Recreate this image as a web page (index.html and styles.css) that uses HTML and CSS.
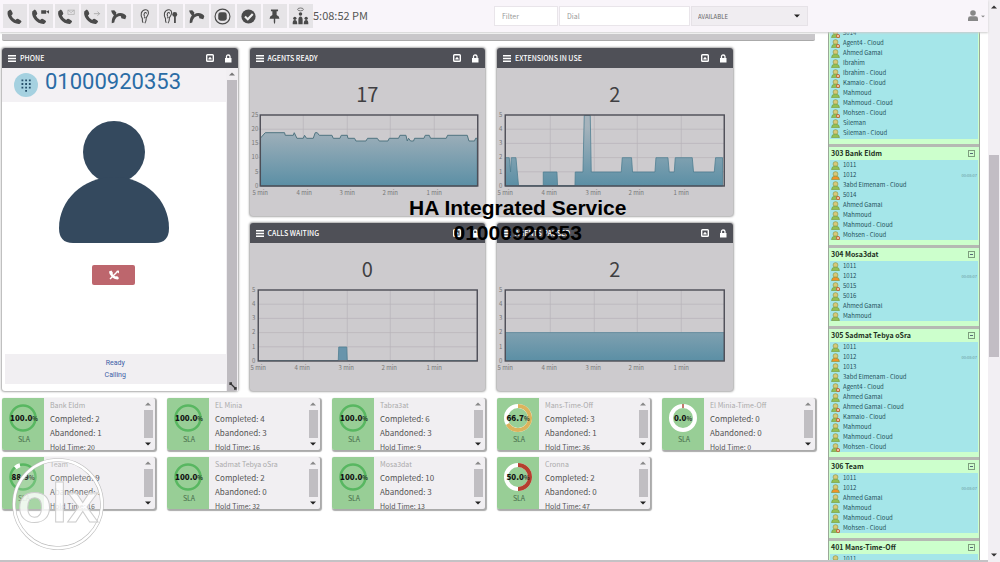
FILE: index.html
```html
<!DOCTYPE html>
<html lang="en">
<head>
<meta charset="utf-8">
<title>Call Center Dashboard</title>
<link rel="stylesheet" href="styles.css">
</head>
<body>
<svg class="defs" width="0" height="0" aria-hidden="true">
  <defs>
    <linearGradient id="area" gradientUnits="userSpaceOnUse" x1="0" y1="14" x2="0" y2="74">
      <stop offset="0" stop-color="#a6b3bc"/><stop offset="1" stop-color="#5b8fa5"/>
    </linearGradient>
    <symbol id="handset" viewBox="0 0 24 24"><path d="M2.500 4.500 6 2Q8 2.500 9.500 7.500 9.500 9.500 7.500 10.500 9 14.500 13.500 17 15.500 14.500 17.500 15.500 22 18 22 19.500L19 22.500Q11 23 5.500 16 1 10 2.500 4.500Z"/></symbol>
    <symbol id="hangup" viewBox="0 0 24 24"><path d="M1.500 3.500 6 3 9 6.500 8.500 9Q14 5.500 20 8.500 23 10.500 23 12L21.500 16 16 14.500 15.500 11.500Q12 10.500 9 13.500 6.500 16.500 6 20.500L2.500 21.500Q2 14.500 5.500 10.500 2.500 8 1.500 3.500Z"/></symbol>
    <symbol id="ear" viewBox="0 0 24 24"><path d="M10 21Q8.500 18 9 15 6.500 11 7.500 7 9.500 2 14 2.500 18 3 17.500 8 16.500 11 14.500 13.500 14.500 19 12.500 21.500M12 12Q10.500 9 12 7 14 5.500 15 8M11.500 14.500 13 12.500" fill="none" stroke="currentColor" stroke-width="1.500"/></symbol>
    <symbol id="menu" viewBox="0 0 8 7"><path d="M0 0h8v1.500H0zM0 2.700h8v1.500H0zM0 5.400h8v1.500H0z"/></symbol>
    <symbol id="collapse" viewBox="0 0 8 8"><rect x=".7" y=".7" width="6.600" height="6.600" rx=".8" fill="none" stroke="currentColor" stroke-width="1.400"/><path d="M2.300 4.800 4 2.800 5.700 4.800V5.500H2.300Z"/></symbol>
    <symbol id="lock" viewBox="0 0 8 9"><path d="M1 4h6.500v4.500H1z"/><path d="M2.500 4V2.500Q2.500 1 4.200 1T6 2.500V4" fill="none" stroke="currentColor" stroke-width="1.300"/></symbol>
    <symbol id="up" viewBox="0 0 6 4"><path d="M0 3.500 3 .5 6 3.500Z"/></symbol>
    <symbol id="down" viewBox="0 0 6 4"><path d="M0 .5 3 3.500 6 .5Z"/></symbol>
    <symbol id="person" viewBox="0 0 10 10"><circle cx="5" cy="3.400" r="2.700" fill="#d8c878" stroke="#8c9440" stroke-width=".7"/><path d="M.6 9.600Q.6 5.600 5 5.600T9.400 9.600Z" fill="currentColor" stroke="#6f9440" stroke-width=".6"/></symbol>
    <symbol id="person-off" viewBox="0 0 10 10"><use href="#person"/><circle cx="7.800" cy="7.800" r="1.800" fill="#f0c8a8" stroke="#c2552e" stroke-width=".9"/></symbol>
    <symbol id="grid" viewBox="0 0 235 90"><path d="M8 17.200H227M8 31.400H227M8 45.600H227M8 59.800H227M53 3V74M97 3V74M140 3V74M184 3V74" fill="none" stroke="#b7b3b9" stroke-width=".7"/></symbol>
  </defs>
</svg>

<div class="shell">
  <div class="app">
    <header class="topbar">
      <div class="tools">
        <button class="tool" aria-label="Call"><svg viewBox="0 0 24 24"><use href="#handset"/></svg></button>
        <button class="tool" aria-label="Call camera"><svg viewBox="0 0 24 24"><use href="#handset" x="-2"/><path d="M13 3h7v5h-7zM20 5l4-2v5z"/></svg></button>
        <button class="tool" aria-label="Call message"><svg viewBox="0 0 24 24"><use href="#handset" x="-2"/><path d="M14 3h9v6h-9zM14 3l4.500 3.500L23 3" fill="none" stroke="#aaa"/></svg></button>
        <button class="tool" aria-label="Transfer"><svg viewBox="0 0 24 24"><use href="#handset" x="-2"/><path d="M14 8h8M19 5l3 3-3 3" fill="none" stroke="#999"/></svg></button>
        <button class="tool" aria-label="Hang up"><svg viewBox="0 0 24 24"><use href="#hangup"/></svg></button>
        <button class="tool" aria-label="Listen"><svg viewBox="0 0 24 24"><use href="#ear"/></svg></button>
        <button class="tool" aria-label="Whisper"><svg viewBox="0 0 24 24"><use href="#ear" x="-4"/><circle cx="18" cy="9" r="3.500"/><path d="M17 11h2.500v10H17z"/></svg></button>
        <button class="tool" aria-label="Barge"><svg viewBox="0 0 24 24"><use href="#hangup"/></svg></button>
        <button class="tool" aria-label="Record"><svg viewBox="0 0 24 24"><circle cx="12" cy="12" r="10.500" fill="none" stroke="currentColor" stroke-width="1.600"/><rect x="6" y="6" width="12" height="12" rx="3.500"/></svg></button>
        <button class="tool" aria-label="Confirm"><svg viewBox="0 0 24 24"><circle cx="12" cy="12" r="10"/><path d="m7 12 4 4 7-7.500" fill="none" stroke="#eee" stroke-width="3"/></svg></button>
        <button class="tool" aria-label="Pin"><svg viewBox="0 0 24 24"><path d="M7 2h10v2.500h-2V10q4 1.500 4 5H13v5l-1 3-1-3v-5H5q0-3.500 4-5V4.500H7z"/></svg></button>
        <button class="tool" aria-label="Conference"><svg viewBox="0 0 24 24"><ellipse cx="12" cy="2" rx="4" ry="2" fill="none" stroke="currentColor"/><circle cx="12" cy="8.500" r="2.500"/><path d="M9 17q0-5 3-5t3 5v6H9zM1 23q-.5-6 3-6t3.500 6zM16.500 23q0-6 3.500-6t3 6z"/><circle cx="4" cy="14.500" r="2.300"/><circle cx="20" cy="14.500" r="2.300"/></svg></button>
      </div>
      <time class="clock">5:08:52 PM</time>
      <form class="dialer">
        <input class="field filter" type="text" placeholder="Filter" aria-label="Filter">
        <input class="field dial" type="text" placeholder="Dial" aria-label="Dial">
        <div class="status"><select aria-label="Agent status"><option>AVAILABLE</option></select><svg class="caret" viewBox="0 0 6 4"><use href="#down"/></svg></div>
      </form>
      <button class="account" aria-label="Account"><svg class="account-icon" viewBox="0 0 12 12"><circle cx="6" cy="3" r="2.800"/><path d="M1 11V8.500Q1 6.300 3.500 6.300H8.500Q11 6.300 11 8.500V11Z"/></svg><svg class="caret-small" viewBox="0 0 6 4"><use href="#down"/></svg></button>
    </header>

    <div class="content">
      <main class="board">
        <div class="strip"></div>

        <section class="panel phone">
          <h2 class="bar"><svg class="i-menu"><use href="#menu"/></svg><span>PHONE</span><svg class="i-box"><use href="#collapse"/></svg><svg class="i-lock"><use href="#lock"/></svg></h2>
          <div class="phone-body">
            <div class="phone-main">
              <div class="caller">
                <button class="keypad" aria-label="Keypad"><svg viewBox="0 0 24 24"><g fill="none" stroke="#26506b" stroke-width="1.800" stroke-dasharray="1.800 1.900"><path d="M7.500 7.400h9.200M7.500 11h9.200M7.500 14.600h9.200"/></g><path d="M11.200 17h1.800v1.800h-1.800z" fill="#26506b"/></svg></button>
                <span class="number">01000920353</span>
              </div>
              <svg class="avatar" viewBox="0 0 110 123"><g fill="#34495e"><circle cx="55" cy="31" r="31"/><path d="M0 107C0 79 24 56 55 56S110 79 110 107Q110 122 96 122H14Q0 122 0 107Z"/></g></svg>
              <button class="reject" aria-label="Reject call"><svg viewBox="0 0 12 10"><path d="M1 1.500 3.500.5 5 3 4.500 4Q6 6 8 6.500L9 6 11 8 10 9.500Q6 9.500 3.500 6.500Q1 4 1 1.500Z"/><path d="M2 9 10 1" fill="none" stroke="#fff" stroke-width="1.500"/><path d="M8 1l3-.5v3z"/></svg></button>
              <div class="call-state"><div>Ready</div><div>Calling</div></div>
            </div>
            <div class="rail"><svg class="arrow"><use href="#up"/></svg><div class="thumb"></div><svg class="grip" viewBox="0 0 8 8"><path d="M1 1 7 7M1 3V1H3M5 7H7V5" fill="none" stroke="#333" stroke-width="1.300"/></svg></div>
          </div>
        </section>

        <section class="panel">
          <h2 class="bar"><svg class="i-menu"><use href="#menu"/></svg><span>AGENTS READY</span><svg class="i-box"><use href="#collapse"/></svg><svg class="i-lock"><use href="#lock"/></svg></h2>
          <div class="value">17</div>
          <svg class="chart" viewBox="0 0 235 90">
            <use href="#grid"/>
            <path fill="url(#area)" stroke="#4f7480" d="M10.300 26 15 20.700H34.300L35 23.300H43L44 20.700 46.700 26.300H53L54.300 23.300 56.300 26.300H63L65 20.700H67L69 23.300H81.700L83 26.300H89.700L91 23.300H97L97.700 26.300H104.300L105.700 29H115.700L117.300 26.300H127L129 29H137.700L139 26.300H148.300L149.700 23.300H155.700L157 29 158.300 26.300 160.300 29H163.300L164.300 26.300H173.700L175 23.300H179L180.300 26.300H196L197.300 23.300H217L218.700 29H224.300L225.300 26.300H227V74H10.300Z"/>
            <rect class="frame" x="10" y="3" width="217.500" height="71"/>
            <g class="ticks-y"><text x="8" y="5">25</text><text x="8" y="19">20</text><text x="8" y="33">15</text><text x="8" y="47">10</text><text x="8" y="62">5</text><text x="8" y="76">0</text></g>
            <g class="ticks-x"><text x="10" y="83">5 min</text><text x="54" y="83">4 min</text><text x="97" y="83">3 min</text><text x="140" y="83">2 min</text><text x="184" y="83">1 min</text></g>
          </svg>
        </section>

        <section class="panel">
          <h2 class="bar"><svg class="i-menu"><use href="#menu"/></svg><span>EXTENSIONS IN USE</span><svg class="i-box"><use href="#collapse"/></svg><svg class="i-lock"><use href="#lock"/></svg></h2>
          <div class="value">2</div>
          <svg class="chart" viewBox="0 0 235 90">
            <use href="#grid"/>
            <path fill="url(#area)" stroke="#4f7f92" stroke-width=".8" d="M8 74V45.700H12L13.300 60 14 45.700H18.700L20 60 21.300 73.700H46V60H59.700L60.300 73.700H77.700L78 60H85.700L87 3.500H93L94 60H124L125 45.700H134.300L135.300 60H157.700L158.700 45.700H170.700L172 60H177L178 45.700H195L196.300 60H217L218.300 45.700H225.300V74Z"/>
            <rect class="frame" x="8" y="3" width="219" height="71"/>
            <g class="ticks-y"><text x="5" y="5">5</text><text x="5" y="19">4</text><text x="5" y="33">3</text><text x="5" y="47">2</text><text x="5" y="62">1</text><text x="5" y="76">0</text></g>
            <g class="ticks-x"><text x="8" y="83">5 min</text><text x="52" y="83">4 min</text><text x="96" y="83">3 min</text><text x="139" y="83">2 min</text><text x="184" y="83">1 min</text></g>
          </svg>
        </section>

        <section class="panel second">
          <h2 class="bar"><svg class="i-menu"><use href="#menu"/></svg><span>CALLS WAITING</span><svg class="i-box"><use href="#collapse"/></svg><svg class="i-lock"><use href="#lock"/></svg></h2>
          <div class="value">0</div>
          <svg class="chart" viewBox="0 0 235 90">
            <use href="#grid"/>
            <path fill="#6894ab" stroke="#4f7f92" stroke-width=".8" d="M8 73.500H88L88.500 60H96.500L97 73.500H227"/>
            <rect class="frame" x="8" y="3" width="219" height="71"/>
            <g class="ticks-y"><text x="5" y="5">5</text><text x="5" y="19">4</text><text x="5" y="33">3</text><text x="5" y="47">2</text><text x="5" y="62">1</text><text x="5" y="76">0</text></g>
            <g class="ticks-x"><text x="8" y="83">5 min</text><text x="52" y="83">4 min</text><text x="96" y="83">3 min</text><text x="139" y="83">2 min</text><text x="184" y="83">1 min</text></g>
          </svg>
        </section>

        <section class="panel">
          <h2 class="bar"><svg class="i-menu"><use href="#menu"/></svg><span>AGENTS PAUSED</span><svg class="i-box"><use href="#collapse"/></svg><svg class="i-lock"><use href="#lock"/></svg></h2>
          <div class="value">2</div>
          <svg class="chart" viewBox="0 0 235 90">
            <use href="#grid"/>
            <path fill="url(#area)" d="M8 45.600H227V74H8Z"/><path d="M8 45.600H227" stroke="#5b8799" stroke-width=".8"/>
            <rect class="frame" x="8" y="3" width="219" height="71"/>
            <g class="ticks-y"><text x="5" y="5">5</text><text x="5" y="19">4</text><text x="5" y="33">3</text><text x="5" y="47">2</text><text x="5" y="62">1</text><text x="5" y="76">0</text></g>
            <g class="ticks-x"><text x="8" y="83">5 min</text><text x="52" y="83">4 min</text><text x="96" y="83">3 min</text><text x="139" y="83">2 min</text><text x="184" y="83">1 min</text></g>
          </svg>
        </section>

        <article class="card first">
          <div class="sla"><svg class="ring" viewBox="0 0 30 28"><circle class="full" cx="14" cy="14" r="12.500"/><text x="15" y="17">100.0<tspan>%</tspan></text></svg><span>SLA</span></div>
          <div class="stats"><h3>Bank Eldm</h3><p>Completed: 2</p><p>Abandoned: 1</p><p class="hold">Hold Time: 20</p></div>
          <div class="mini-rail"><svg><use href="#up"/></svg><i></i><svg class="dark"><use href="#down"/></svg></div>
        </article>
        <article class="card">
          <div class="sla"><svg class="ring" viewBox="0 0 30 28"><circle class="full" cx="14" cy="14" r="12.500"/><text x="15" y="17">100.0<tspan>%</tspan></text></svg><span>SLA</span></div>
          <div class="stats"><h3>EL Minia</h3><p>Completed: 4</p><p>Abandoned: 3</p><p class="hold">Hold Time: 16</p></div>
          <div class="mini-rail"><svg><use href="#up"/></svg><i></i><svg class="dark"><use href="#down"/></svg></div>
        </article>
        <article class="card">
          <div class="sla"><svg class="ring" viewBox="0 0 30 28"><circle class="full" cx="14" cy="14" r="12.500"/><text x="15" y="17">100.0<tspan>%</tspan></text></svg><span>SLA</span></div>
          <div class="stats"><h3>Tabra3at</h3><p>Completed: 6</p><p>Abandoned: 3</p><p class="hold">Hold Time: 9</p></div>
          <div class="mini-rail"><svg><use href="#up"/></svg><i></i><svg class="dark"><use href="#down"/></svg></div>
        </article>
        <article class="card">
          <div class="sla"><svg class="ring" viewBox="0 0 30 28"><circle class="track" cx="14" cy="14" r="12"/><path class="arc" stroke="#dcb35c" d="M14 2A12 12 0 1 1 3.600 20"/><text x="14" y="17">66.7<tspan>%</tspan></text></svg><span>SLA</span></div>
          <div class="stats"><h3>Mans-Time-Off</h3><p>Completed: 3</p><p>Abandoned: 1</p><p class="hold">Hold Time: 36</p></div>
          <div class="mini-rail"><svg><use href="#up"/></svg><i></i><svg class="dark"><use href="#down"/></svg></div>
        </article>
        <article class="card">
          <div class="sla"><svg class="ring" viewBox="0 0 30 28"><circle class="track" cx="14" cy="14" r="12"/><path class="arc" stroke="#a8402f" d="M13.300 2H14.700"/><text x="14" y="17">0.0<tspan>%</tspan></text></svg><span>SLA</span></div>
          <div class="stats"><h3>El Minia-Time-Off</h3><p>Completed: 0</p><p>Abandoned: 0</p><p class="hold">Hold Time: 0</p></div>
          <div class="mini-rail"><svg><use href="#up"/></svg><i></i><svg class="dark"><use href="#down"/></svg></div>
        </article>
        <article class="card first">
          <div class="sla"><svg class="ring" viewBox="0 0 30 28"><circle class="full" cx="14" cy="14" r="12.500"/><path class="arc" stroke="#fff" d="M6.300 4.800Q8.500 2.800 11 2.300"/><text x="14" y="17">88.9<tspan>%</tspan></text></svg><span>SLA</span></div>
          <div class="stats"><h3>Team</h3><p>Completed: 9</p><p>Abandoned: 1</p><p class="hold">Hold Time: 16</p></div>
          <div class="mini-rail"><svg><use href="#up"/></svg><i></i><svg class="dark"><use href="#down"/></svg></div>
        </article>
        <article class="card">
          <div class="sla"><svg class="ring" viewBox="0 0 30 28"><circle class="full" cx="14" cy="14" r="12.500"/><text x="15" y="17">100.0<tspan>%</tspan></text></svg><span>SLA</span></div>
          <div class="stats"><h3>Sadmat Tebya oSra</h3><p>Completed: 2</p><p>Abandoned: 0</p><p class="hold">Hold Time: 32</p></div>
          <div class="mini-rail"><svg><use href="#up"/></svg><i></i><svg class="dark"><use href="#down"/></svg></div>
        </article>
        <article class="card">
          <div class="sla"><svg class="ring" viewBox="0 0 30 28"><circle class="full" cx="14" cy="14" r="12.500"/><text x="15" y="17">100.0<tspan>%</tspan></text></svg><span>SLA</span></div>
          <div class="stats"><h3>Mosa3dat</h3><p>Completed: 10</p><p>Abandoned: 3</p><p class="hold">Hold Time: 13</p></div>
          <div class="mini-rail"><svg><use href="#up"/></svg><i></i><svg class="dark"><use href="#down"/></svg></div>
        </article>
        <article class="card">
          <div class="sla"><svg class="ring" viewBox="0 0 30 28"><circle class="track" cx="14" cy="14" r="12"/><path class="arc" stroke="#b5402f" d="M14 2A12 12 0 0 1 14 26"/><text x="14" y="17">50.0<tspan>%</tspan></text></svg><span>SLA</span></div>
          <div class="stats"><h3>Cronna</h3><p>Completed: 2</p><p>Abandoned: 0</p><p class="hold">Hold Time: 47</p></div>
          <div class="mini-rail"><svg><use href="#up"/></svg><i></i><svg class="dark"><use href="#down"/></svg></div>
        </article>
      </main>

      <aside class="queues">
        <section class="queue">
          <ul class="continued">
            <li><svg><use href="#person-off"/></svg>5014</li>
            <li><svg><use href="#person-off"/></svg>Agent4 - Cloud</li>
            <li><svg><use href="#person"/></svg>Ahmed Gamal</li>
            <li><svg><use href="#person"/></svg>Ibrahim</li>
            <li><svg><use href="#person-off"/></svg>Ibrahim - Cloud</li>
            <li><svg><use href="#person-off"/></svg>Kamalo - Cloud</li>
            <li><svg><use href="#person"/></svg>Mahmoud</li>
            <li><svg><use href="#person"/></svg>Mahmoud - Cloud</li>
            <li><svg><use href="#person-off"/></svg>Mohsen - Cloud</li>
            <li><svg><use href="#person"/></svg>Sileman</li>
            <li><svg><use href="#person"/></svg>Sileman - Cloud</li>
          </ul>
        </section>
        <section class="queue">
          <h3>303 Bank Eldm<button aria-label="Collapse 303"></button></h3>
          <ul>
            <li><svg><use href="#person"/></svg>1011</li>
            <li class="busy"><svg><use href="#person"/></svg>1012<time>00:08:07</time></li>
            <li><svg><use href="#person"/></svg>3abd Elmenam - Cloud</li>
            <li><svg><use href="#person-off"/></svg>5014</li>
            <li><svg><use href="#person"/></svg>Ahmed Gamal</li>
            <li><svg><use href="#person"/></svg>Mahmoud</li>
            <li><svg><use href="#person"/></svg>Mahmoud - Cloud</li>
            <li><svg><use href="#person-off"/></svg>Mohsen - Cloud</li>
          </ul>
        </section>
        <section class="queue">
          <h3>304 Mosa3dat<button aria-label="Collapse 304"></button></h3>
          <ul>
            <li><svg><use href="#person"/></svg>1011</li>
            <li class="busy"><svg><use href="#person"/></svg>1012<time>00:08:07</time></li>
            <li><svg><use href="#person-off"/></svg>5015</li>
            <li><svg><use href="#person"/></svg>5016</li>
            <li><svg><use href="#person"/></svg>Ahmed Gamal</li>
            <li><svg><use href="#person"/></svg>Mahmoud</li>
          </ul>
        </section>
        <section class="queue">
          <h3>305 Sadmat Tebya oSra<button aria-label="Collapse 305"></button></h3>
          <ul>
            <li><svg><use href="#person"/></svg>1011</li>
            <li class="busy"><svg><use href="#person"/></svg>1012<time>00:08:07</time></li>
            <li><svg><use href="#person"/></svg>1013</li>
            <li><svg><use href="#person"/></svg>3abd Elmenam - Cloud</li>
            <li><svg><use href="#person-off"/></svg>Agent4 - Cloud</li>
            <li><svg><use href="#person"/></svg>Ahmed Gamal</li>
            <li><svg><use href="#person-off"/></svg>Ahmed Gamal - Cloud</li>
            <li><svg><use href="#person-off"/></svg>Kamalo - Cloud</li>
            <li><svg><use href="#person"/></svg>Mahmoud</li>
            <li><svg><use href="#person"/></svg>Mahmoud - Cloud</li>
            <li><svg><use href="#person-off"/></svg>Mohsen - Cloud</li>
          </ul>
        </section>
        <section class="queue">
          <h3>306 Team<button aria-label="Collapse 306"></button></h3>
          <ul>
            <li><svg><use href="#person"/></svg>1011</li>
            <li class="busy"><svg><use href="#person"/></svg>1012<time>00:08:07</time></li>
            <li><svg><use href="#person"/></svg>Ahmed Gamal</li>
            <li><svg><use href="#person"/></svg>Mahmoud</li>
            <li><svg><use href="#person"/></svg>Mahmoud - Cloud</li>
            <li><svg><use href="#person-off"/></svg>Mohsen - Cloud</li>
          </ul>
        </section>
        <section class="queue">
          <h3>401 Mans-Time-Off<button aria-label="Collapse 401"></button></h3>
          <ul>
            <li><svg><use href="#person"/></svg>1011</li>
          </ul>
        </section>
      </aside>
    </div>
  </div>

  <div class="page-rail"><svg><use href="#up"/></svg><div class="track-area"><div class="page-thumb"></div></div><svg><use href="#down"/></svg></div>
</div>

<div class="banner">HA Integrated Service<br>01000920353</div>
<svg class="stamp" viewBox="0 0 92 92"><circle cx="46" cy="46" r="44" fill="#fff" fill-opacity=".15" stroke="#bbb" stroke-width="3.600"/><circle cx="46" cy="46" r="44" fill="none" stroke="#fff" stroke-width="2.400"/><text x="46" y="64" text-anchor="middle">olx</text></svg>
</body>
</html>
```
FILE: styles.css
```css
* { box-sizing: border-box; }

body {
  margin: 0;
  height: 100vh;
  overflow: hidden;
  position: relative;
  background: #fff;
  color: #333;
  font-family: "Noto Sans CJK SC", "Open Sans", sans-serif;
  font-size: 8px;
}

h2, h3, p, ul { margin: 0; padding: 0; }
ul { list-style: none; }
button, input, select { font: inherit; color: inherit; }
button { border: 0; padding: 0; background: none; }
svg { display: block; fill: currentColor; }
.defs { position: absolute; }

.shell { display: flex; height: 100vh; }
.app {
  flex: 1;
  min-width: 0;
  display: flex;
  flex-direction: column;
  border-bottom: 2px solid #c4c2c5;
}

/* top bar */
.topbar {
  display: flex;
  align-items: center;
  height: 32px;
  flex: none;
  padding-left: 3px;
  background: #f9f5fa;
  box-shadow: 0 1px 2px #ccc;
  z-index: 1;
}
.tools { display: flex; gap: 2px; }
.tool {
  width: 24px;
  height: 24px;
  padding: 3px;
  background: #e6e4e7;
  color: #4a4a4a;
}
.tool svg { width: 17px; height: 17px; overflow: visible; }
.clock { font-size: 11px; line-height: 16px; color: #555; padding-bottom: 3px; }
.dialer { display: flex; margin-left: auto; gap: 1px; }
.field {
  height: 20px;
  border: 1px solid #e9e5ea;
  background: #fff;
  padding: 0 7px;
  font-size: 7px;
}
.field::placeholder { color: #999; }
.filter { width: 64px; }
.dial { width: 131px; }
.status { position: relative; width: 117px; }
.status select {
  appearance: none;
  width: 100%;
  height: 20px;
  border: 1px solid #e6e2e7;
  background: #f0edf1;
  padding: 0 6px;
  font-size: 6px;
  color: #666;
}
.caret { position: absolute; right: 8px; top: 8px; width: 6px; height: 4px; color: #222; }
.account {
  display: flex;
  align-items: center;
  gap: 2px;
  margin: 0 3px 0 159px;
  color: #888;
}
.account-icon { width: 12px; height: 12px; }
.caret-small { width: 4px; height: 3px; }

/* dashboard */
.content { display: flex; flex: 1; min-height: 0; overflow: hidden; }
.board {
  flex: 1;
  min-width: 0;
  display: grid;
  grid-template-columns: repeat(10, 1fr);
  gap: 7px 12px;
  align-content: start;
  padding: 2px 13px 0 2px;
}
.strip {
  grid-column: 1 / -1;
  height: 7px;
  background: #c9c7ca;
  border-bottom: 1px solid #aaa;
  border-radius: 0 0 2px 2px;
}
.panel {
  grid-column: span 3;
  background: #cdcbce;
  border-radius: 3px;
  box-shadow: 0 0 2px 1px #aaa;
  padding-bottom: 14px;
}
.second { grid-column: 4 / span 3; }
.bar {
  display: flex;
  align-items: center;
  height: 20px;
  padding: 0 6px;
  background: #4f5057;
  color: #fff;
  border-radius: 3px 3px 0 0;
  font-size: 7px;
  line-height: 20px;
  font-weight: 500;
}
.bar span { flex: 1; padding-left: 4px; }
.i-menu { width: 8px; height: 7px; }
.i-box { width: 8px; height: 8px; margin-right: 10px; }
.i-lock { width: 8px; height: 9px; }
.value {
  padding-top: 8px;
  font-size: 20px;
  line-height: 36px;
  text-align: center;
  color: #3f3f42;
}
.chart { width: 100%; height: 90px; overflow: visible; }
.frame { fill: none; stroke: #4c4c55; stroke-width: 1.4; }
.ticks-y, .ticks-x { font-size: 6px; fill: #777; }
.ticks-y { text-anchor: end; }
.ticks-x { text-anchor: middle; }

/* phone */
.phone {
  grid-row: 2 / span 2;
  display: flex;
  flex-direction: column;
  background: #fff;
  padding: 0;
}
.phone-body { display: flex; flex: 1; }
.phone-main {
  flex: 1;
  display: flex;
  flex-direction: column;
  align-items: center;
  padding-bottom: 7px;
}
.caller {
  align-self: stretch;
  display: flex;
  align-items: center;
  gap: 7px;
  height: 34px;
  padding-left: 12px;
  background: #f3f1f4;
}
.keypad { width: 24px; height: 24px; border-radius: 50%; background: #a5d1e0; }
.number {
  font-family: Roboto, sans-serif;
  font-size: 22px;
  line-height: 24px;
  color: #2a6ca5;
  padding-bottom: 6px;
}
.avatar { width: 110px; height: 123px; margin-top: 19px; }
.reject {
  width: 43px;
  height: 20px;
  margin-top: 21px;
  display: grid;
  place-items: center;
  border-radius: 2px;
  background: #bd666d;
  color: #fff;
}
.reject svg { width: 12px; height: 10px; }
.call-state {
  align-self: stretch;
  margin: auto 0 0 3px;
  padding: 3px 0;
  background: #f1eff2;
  color: #3c60a6;
  font: 7px/12px Roboto, sans-serif;
  text-align: center;
}
.rail {
  width: 12px;
  display: flex;
  flex-direction: column;
  align-items: center;
  background: #f1eff2;
  position: relative;
}
.arrow { width: 6px; height: 4px; margin: 4px 0; color: #777; }
.thumb { flex: 1; width: 10px; background: #bebbc0; }
.grip { position: absolute; right: 1px; bottom: 1px; width: 8px; height: 8px; }

/* queue statistics */
.card {
  grid-column: span 2;
  display: flex;
  height: 52px;
  overflow: hidden;
  background: #f1eff2;
  border-radius: 2px;
  box-shadow: 1px 1px 1px 1px #aaa;
}
.card.first { grid-column: 1 / span 2; }
.sla {
  width: 42px;
  padding: 6px 0 0 7px;
  background: #98ce96;
  color: #476a49;
}
.sla span { display: block; width: 30px; text-align: center; font-size: 7px; line-height: 14px; }
.ring { width: 30px; height: 28px; overflow: visible; }
.ring text { font-size: 8px; font-weight: 900; fill: #111; text-anchor: middle; }
.ring tspan { font-size: 6px; font-weight: 500; }
.full { fill: none; stroke: #58b761; stroke-width: 2.5; }
.track { fill: none; stroke: #fff; stroke-width: 4; }
.arc { fill: none; stroke-width: 4; }
.stats { flex: 1; padding: 1px 0 0 6px; white-space: nowrap; color: #555; }
.stats h3 { font-size: 7px; font-weight: 400; line-height: 13px; color: #aaa; }
.stats p { font-size: 8px; line-height: 14px; }
.stats .hold { font-size: 7px; }
.mini-rail {
  width: 14px;
  display: flex;
  flex-direction: column;
  align-items: center;
  padding: 4px 0;
  color: #888;
}
.mini-rail svg { width: 6px; height: 4px; }
.mini-rail i { flex: 1; width: 9px; margin: 4px 0; background: #c0bec2; }
.mini-rail .dark { color: #222; }

/* agents by queue */
.queues {
  width: 152px;
  margin-right: 8px;
  display: flex;
  flex-direction: column;
  gap: 3px;
  overflow: hidden;
  background: #b5b9b3;
  border: solid #9aa898;
  border-width: 0 1px;
}
.queue { flex: none; padding: 0 1px 5px; background: #ccffcc; }
.queue h3 {
  display: flex;
  align-items: center;
  justify-content: space-between;
  height: 13px;
  padding: 0 3px 0 1px;
  font-size: 7px;
  line-height: 13px;
  font-weight: 700;
  color: #1d301d;
}
.queue h3 button {
  width: 7px;
  height: 7px;
  border: 1px solid #7d9d7d;
  background: linear-gradient(#567, #567) center / 3px 1px no-repeat;
}
.queue ul { background: #a5e6e9; }
.queue .continued { margin-top: -4px; padding-bottom: 1px; }
.queue li {
  display: flex;
  align-items: center;
  gap: 3px;
  height: 10px;
  padding: 0 1px;
  font-size: 6px;
  line-height: 10px;
  color: #24505a;
}
.queue li svg { width: 9px; height: 9px; color: #94bf55; }
.queue .busy svg { color: #f0932b; }
.queue li time { margin-left: auto; font-size: 4px; color: #6a9aa0; }

/* page scrollbar */
.page-rail {
  width: 12px;
  display: flex;
  flex-direction: column;
  align-items: center;
  padding: 5px 0;
  background: #f2eff3;
  color: #333;
}
.page-rail svg { width: 6px; height: 4px; }
.track-area { flex: 1; padding-top: 26vh; }
.page-thumb { width: 10px; height: 36vh; background: #c2bdc4; }

/* overlays */
.banner {
  position: absolute;
  left: 409px;
  top: 195px;
  color: #000;
  text-align: center;
  font: bold 21px/25px "Liberation Sans", Arial, sans-serif;
}
.stamp { position: absolute; left: 12px; top: 458px; width: 92px; height: 92px; }
.stamp text {
  font: bold 56px "Liberation Sans", Arial, sans-serif;
  fill: #fff;
  fill-opacity: .8;
  stroke: #ccc;
  stroke-width: 1;
}
```
